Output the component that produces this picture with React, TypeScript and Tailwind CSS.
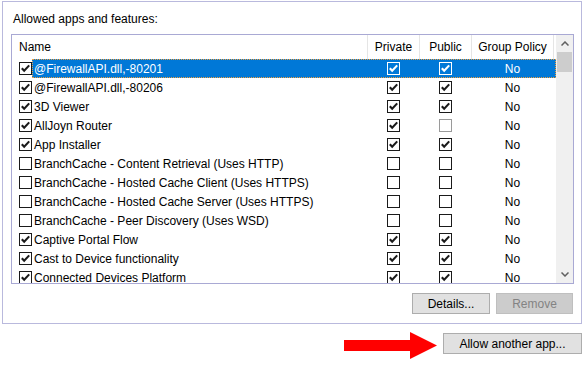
import React from 'react';

interface AppRule {
  name: string;
  enabled: boolean;
  priv: boolean;
  pub: boolean;
  pubGray?: boolean;
}

const rules: AppRule[] = [
  { name: '@FirewallAPI.dll,-80201', enabled: true, priv: true, pub: true },
  { name: '@FirewallAPI.dll,-80206', enabled: true, priv: true, pub: true },
  { name: '3D Viewer', enabled: true, priv: true, pub: true },
  { name: 'AllJoyn Router', enabled: true, priv: true, pub: false, pubGray: true },
  { name: 'App Installer', enabled: true, priv: true, pub: true },
  { name: 'BranchCache - Content Retrieval (Uses HTTP)', enabled: false, priv: false, pub: false },
  { name: 'BranchCache - Hosted Cache Client (Uses HTTPS)', enabled: false, priv: false, pub: false },
  { name: 'BranchCache - Hosted Cache Server (Uses HTTPS)', enabled: false, priv: false, pub: false },
  { name: 'BranchCache - Peer Discovery (Uses WSD)', enabled: false, priv: false, pub: false },
  { name: 'Captive Portal Flow', enabled: true, priv: true, pub: true },
  { name: 'Cast to Device functionality', enabled: true, priv: true, pub: true },
  { name: 'Connected Devices Platform', enabled: true, priv: true, pub: true },
];

function CheckBox({ checked, color }: { checked: boolean; color: string }) {
  return (
    <svg width="13" height="13" viewBox="0 0 13 13" className="block shrink-0">
      <rect x="0.5" y="0.5" width="12" height="12" fill="none" stroke={color} />
      {checked && (
        <path d="M2.8 6.2 L5.2 8.8 L10.2 3.4" fill="none" stroke={color} strokeWidth="2.1" />
      )}
    </svg>
  );
}

function Chevron({ up }: { up: boolean }) {
  return (
    <svg width="8" height="5" viewBox="0 0 8 5" className="block">
      <path d={up ? 'M0.5 4.5 L4 1 L7.5 4.5' : 'M0.5 0.5 L4 4 L7.5 0.5'} fill="none" stroke="#606060" strokeWidth="1.5" />
    </svg>
  );
}

export default function App() {
  return (
    <div className="w-[584px] h-[366px] bg-white pt-[1px] pl-[2px] font-['Liberation_Sans',Arial,sans-serif] text-[12px] text-black overflow-hidden">
      <div className="w-[580px] h-[323px] border border-[#b9b9dd] pl-[8px] pr-[7px]">
        <div className="h-[16px] leading-[16px] mt-[9px] mb-[7px] pl-[2px]">Allowed apps and features:</div>

        <div className="w-[563px] h-[250px] border border-[#a9a9d4] flex overflow-hidden">
          <div className="flex-1 overflow-hidden">
            <div className="flex h-[24px] items-center">
              <div className="w-[355px] pl-[7px]">Name</div>
              <div className="w-[52px] h-full border-l border-[#e5e5e5] flex items-center justify-center">Private</div>
              <div className="w-[52px] h-full border-l border-[#e5e5e5] flex items-center justify-center">Public</div>
              <div className="w-[83px] h-full border-l border-r border-[#e5e5e5] flex items-center justify-center">Group Policy</div>
            </div>

            {rules.map((r, i) => {
              const selected = i === 0;
              const boxColor = selected ? '#ffffff' : '#1a1a1a';
              return (
                <div key={r.name} className="flex h-[19px] items-center">
                  <div className="pl-[7px] shrink-0">
                    <CheckBox checked={r.enabled} color="#1a1a1a" />
                  </div>
                  <div
                    className={`flex-1 flex h-full items-center border border-dotted ${
                      selected ? 'bg-[#0078d7] text-white border-[#f0a040]' : 'border-transparent'
                    }`}
                  >
                    <div className="w-[334px] pl-[1px] whitespace-nowrap">{r.name}</div>
                    <div className="w-[52px] flex justify-center">
                      <CheckBox checked={r.priv} color={boxColor} />
                    </div>
                    <div className="w-[52px] flex justify-center">
                      <CheckBox checked={r.pub} color={selected ? '#ffffff' : r.pubGray ? '#9a9a9a' : '#1a1a1a'} />
                    </div>
                    <div className="w-[83px] text-center">No</div>
                  </div>
                </div>
              );
            })}
          </div>

          <div className="w-[17px] flex flex-col bg-[#f0f0f0]">
            <div className="h-[17px] flex items-center justify-center">
              <Chevron up />
            </div>
            <div className="h-[20px] mx-[1px] bg-[#cdcdcd]" />
            <div className="flex-1" />
            <div className="h-[17px] flex items-center justify-center">
              <Chevron up={false} />
            </div>
          </div>
        </div>

        <div className="flex justify-end gap-[6px] mt-[9px] pr-[1px]">
          <button className="w-[78px] h-[21px] bg-[#e1e1e1] border border-[#adadad] leading-none">Details...</button>
          <button className="w-[77px] h-[21px] bg-[#cccccc] border border-[#bfbfbf] text-[#838383] leading-none">Remove</button>
        </div>
      </div>

      <div className="flex justify-end items-start mt-[8px] pr-[2px]">
        <svg width="93" height="27" viewBox="0 0 93 27" className="block">
          <rect x="0" y="8" width="67" height="11" fill="#ff0000" />
          <polygon points="66,0 93,13.5 66,27" fill="#ff0000" />
        </svg>
        <button className="ml-[6px] mt-[1px] w-[139px] h-[21px] bg-[#e1e1e1] border border-[#adadad] leading-none">
          Allow another app...
        </button>
      </div>
    </div>
  );
}
